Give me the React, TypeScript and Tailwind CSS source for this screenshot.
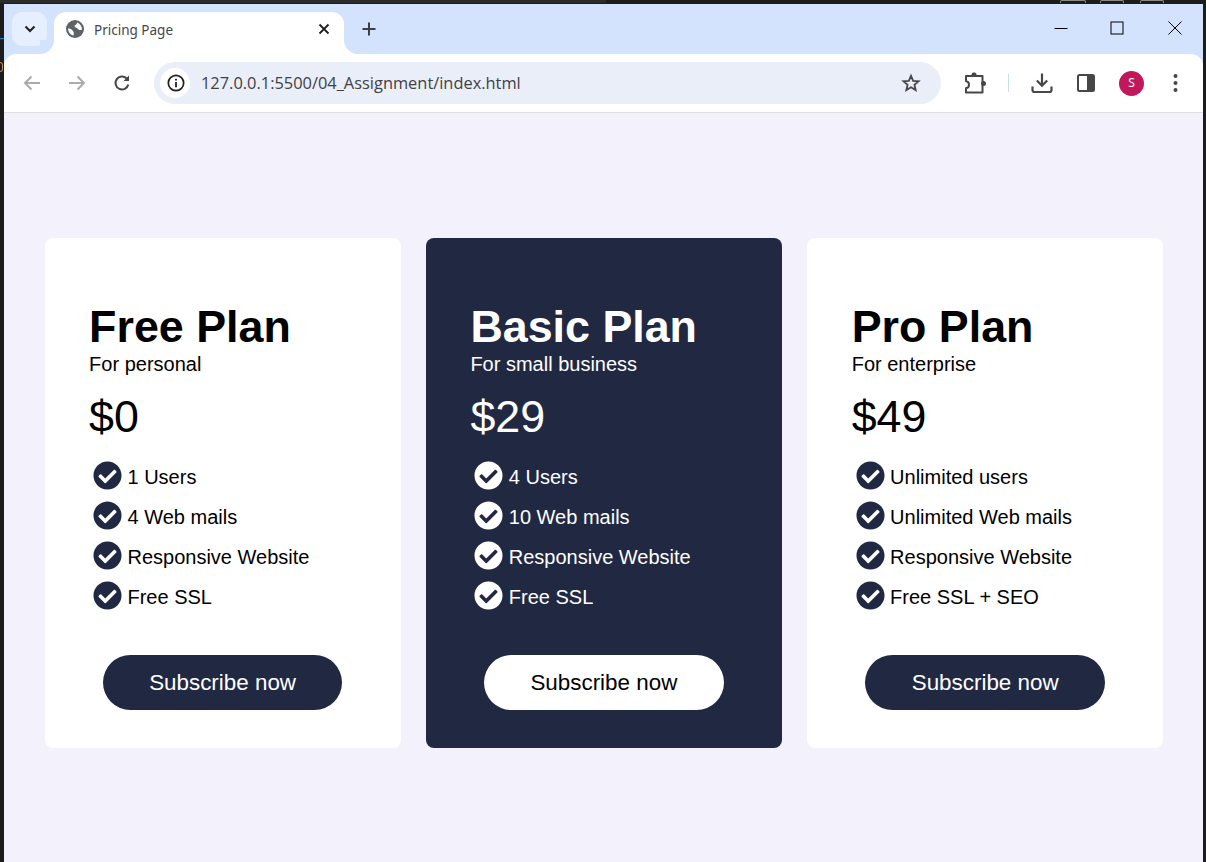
import { FaCheckCircle } from 'react-icons/fa';

const plans = [
  {
    name: 'Free Plan',
    sub: 'For personal',
    price: '$0',
    features: ['1 Users', '4 Web mails', 'Responsive Website', 'Free SSL'],
    dark: false,
  },
  {
    name: 'Basic Plan',
    sub: 'For small business',
    price: '$29',
    features: ['4 Users', '10 Web mails', 'Responsive Website', 'Free SSL'],
    dark: true,
  },
  {
    name: 'Pro Plan',
    sub: 'For enterprise',
    price: '$49',
    features: ['Unlimited users', 'Unlimited Web mails', 'Responsive Website', 'Free SSL + SEO'],
    dark: false,
  },
];

const Globe = () => (
  <svg width="20" height="20" viewBox="0 0 20 20" className="shrink-0">
    <circle cx="10" cy="10" r="9" fill="#5f6368" />
    <path d="M3 9.500C5 9 7 10.500 8 12C9 13 9 15 8.500 16.500C5.500 16 3.200 13 3 9.500Z" fill="#fff" />
    <path d="M12 3.500C15 4.500 17 7.500 17 10.500C15.500 11.500 13.500 11 12.500 9.500C11 8.500 9.500 8 9.500 6.500C11 6 12 5 12 3.500Z" fill="#fff" />
  </svg>
);

const TabStrip = () => (
  <div className="relative flex h-[50px] shrink-0 items-end bg-[#d3e3fd] pl-2">
    <div className="mb-2 mr-[7px] flex h-[34px] w-[35px] items-center justify-center rounded-[10px] bg-[#e6efff]">
      <svg width="12" height="8" viewBox="0 0 12 8" fill="none" stroke="#1f1f1f" strokeWidth="2">
        <path d="M1.500 1.500 6 6l4.500-4.500" />
      </svg>
    </div>
    <div className="relative flex h-[42px] w-[290px] items-center rounded-t-[12px] bg-white pb-[8px] pl-[11px] pr-3">
      <Globe />
      <span className="ml-[9px] mt-[2px] font-['Noto_Sans'] text-[13.500px] text-[#45474a]">Pricing Page</span>
      <svg width="12" height="12" viewBox="0 0 12 12" stroke="#1f1f1f" strokeWidth="1.800" className="ml-auto mr-[2px]">
        <path d="M1.500 1.500 10.500 10.500M10.500 1.500 1.500 10.500" />
      </svg>
      {/* flared tab corners */}
      <div className="absolute bottom-0 left-[-14px] h-[14px] w-[14px] bg-white">
        <div className="h-full w-full rounded-br-[14px] bg-[#d3e3fd]" />
      </div>
      <div className="absolute bottom-0 right-[-14px] h-[14px] w-[14px] bg-white">
        <div className="h-full w-full rounded-bl-[14px] bg-[#d3e3fd]" />
      </div>
    </div>
    <svg width="14" height="14" viewBox="0 0 14 14" stroke="#3c4043" strokeWidth="2" className="mb-[18px] ml-[18px]">
      <path d="M7 .500v13M.500 7h13" />
    </svg>
    <div className="ml-auto mb-[19px] flex items-center">
      <svg width="14" height="14" viewBox="0 0 14 14" stroke="#000" strokeWidth="1" className="mr-[42px]">
        <path d="M0.500 7.500h13" />
      </svg>
      <svg width="14" height="14" viewBox="0 0 14 14" fill="none" stroke="#000" strokeWidth="1" className="mr-[44px]">
        <rect x="1" y="1" width="12" height="12" />
      </svg>
      <svg width="14" height="14" viewBox="0 0 14 14" stroke="#000" strokeWidth="1" className="mr-[21px]">
        <path d="M.500.500l13 13M13.500.500l-13 13" />
      </svg>
    </div>
  </div>
);

const Toolbar = () => (
  <div className="relative flex h-[59px] shrink-0 items-center rounded-t-[12px] border-b border-[#dfdfe3] bg-white">
    <svg width="18" height="16" viewBox="0 0 18 16" fill="none" stroke="#a9abae" strokeWidth="2" className="ml-[19px]">
      <path d="M17 8H2M8.500 1.500 2 8l6.500 6.500" />
    </svg>
    <svg width="18" height="16" viewBox="0 0 18 16" fill="none" stroke="#a9abae" strokeWidth="2" className="ml-[27px]">
      <path d="M1 8h15M9.500 1.500 16 8l-6.500 6.500" />
    </svg>
    <svg width="18" height="18" viewBox="0 0 18 18" fill="none" stroke="#474747" strokeWidth="2" className="ml-[27px]">
      <path d="M15.300 10.500A6.500 6.500 0 1 1 13.500 4.300L15.500 6.300" />
      <path d="M16 1.500v5.500h-5.500" fill="#474747" stroke="none" />
    </svg>
    <div className="ml-[23px] flex h-[42px] w-[787px] items-center rounded-full bg-[#eaeef8] pl-[6px] pr-[20px]">
      <div className="flex h-[30px] w-[30px] items-center justify-center rounded-full bg-white">
        <svg width="18" height="18" viewBox="0 0 18 18" className="ml-[1px]">
          <circle cx="9" cy="9" r="7.700" fill="none" stroke="#1f1f1f" strokeWidth="1.700" />
          <path d="M8.100 8h1.800v5.200H8.100zM8.100 4.800h1.800v1.800H8.100z" fill="#1f1f1f" />
        </svg>
      </div>
      <span className="ml-[11px] mt-[1px] font-['Open_Sans'] text-[16.400px] text-[#3f4145]">
        127.0.0.1:5500/04_Assignment/index.html
      </span>
      <svg width="20" height="20" viewBox="0 0 24 24" fill="none" stroke="#474747" strokeWidth="2.200" strokeLinejoin="miter" className="ml-auto">
        <path d="M12 3.500 14.600 9.500 21 10 16.100 14.200 17.600 20.500 12 17.200 6.400 20.500 7.900 14.200 3 10 9.400 9.500Z" />
      </svg>
    </div>
    <svg width="22" height="22" viewBox="0 0 22 22" fill="#474747" className="ml-[23px]">
      <path d="M2 4h16.500v16.500H2v-4.500c2 0 3-1.500 3-3.500s-1-3-3-3.500z" fill="none" stroke="#474747" strokeWidth="2" strokeLinejoin="round" />
      <rect x="7.500" y="0.500" width="5" height="4" rx="2" />
      <circle cx="19.500" cy="11.500" r="2.500" />
    </svg>
    <div className="ml-[22px] h-[18px] w-px bg-[#c9dcf7]" />
    <svg width="22" height="22" viewBox="0 0 22 22" fill="none" stroke="#474747" strokeWidth="2.200" className="ml-[22px]">
      <path d="M11 1.500V13M5.800 8.500 11 13.700l5.200-5.200M1.500 14.500V18a2 2 0 0 0 2 2h15a2 2 0 0 0 2-2v-3.500" />
    </svg>
    <svg width="18" height="18" viewBox="0 0 18 18" className="ml-[24px]">
      <rect x="1" y="1" width="16" height="16" rx="1.500" fill="#fff" stroke="#474747" strokeWidth="2" />
      <rect x="10" y="1" width="7" height="16" fill="#474747" />
    </svg>
    <div className="ml-[24px] flex h-[25px] w-[25px] items-center justify-center rounded-full bg-[#c2185b] font-['Noto_Sans'] text-[12px] text-white">
      S
    </div>
    <svg width="5" height="20" viewBox="0 0 5 20" fill="#474747" className="ml-[29px]">
      <circle cx="2.500" cy="3" r="2" />
      <circle cx="2.500" cy="10" r="2" />
      <circle cx="2.500" cy="17" r="2" />
    </svg>
  </div>
);

const Card = ({ plan }: { plan: (typeof plans)[number] }) => {
  const dark = plan.dark;
  return (
    <div
      className={`flex h-[510px] w-[356px] flex-col rounded-[8px] px-[44.500px] pt-[63px] ${
        dark ? 'bg-[#212942] text-white' : 'bg-white text-black'
      }`}
    >
      <h2 className="text-[44.800px] font-bold leading-[51px]">{plan.name}</h2>
      <p className="mt-[1px] text-[20px] leading-[23px]">{plan.sub}</p>
      <p className="mt-[15px] text-[44.800px] leading-[51px]">{plan.price}</p>
      <ul className="mt-[19px] flex flex-col gap-[11px]">
        {plan.features.map((f) => (
          <li key={f} className="flex h-[29px] items-center pl-[4px] text-[20px]">
            <FaCheckCircle className={`mr-[5.400px] shrink-0 text-[29px] ${dark ? 'text-white' : 'text-[#212942]'}`} />
            <span className="mt-[3px]">{f}</span>
          </li>
        ))}
      </ul>
      <button
        className={`mx-auto mt-[45px] h-[55px] w-[239.400px] rounded-full text-[22.400px] ${
          dark ? 'bg-white text-black' : 'bg-[#212942] text-white'
        }`}
      >
        Subscribe now
      </button>
    </div>
  );
};

export default function App() {
  return (
    <div className="relative h-[862px] overflow-hidden bg-[#1c1c1c] pl-1 pr-[3px] pt-1 font-['Liberation_Sans',Arial,sans-serif]">
      {/* bits of the desktop showing round the window */}
      <div className="absolute left-0 top-0 h-[3px] w-[606px] bg-[#2b2b2b]" />
      <div className="absolute left-0 top-[38px] h-px w-1 bg-[#0a84d8]" />
      <div className="absolute left-0 top-[62px] h-[10px] w-[3px] rounded-r-full border border-l-0 border-[#c98a4a]" />
      <div className="absolute left-[1060px] top-0 h-[3px] w-[26px] rounded-t-[2px] border border-b-0 border-[#8a8a8a]" />
      <div className="absolute left-[1100px] top-0 h-[3px] w-[24px] rounded-t-[2px] border border-b-0 border-[#8a8a8a]" />
      <div className="absolute left-[1140px] top-0 h-[3px] w-[24px] rounded-t-[2px] border border-b-0 border-[#8a8a8a]" />
      <div className="flex h-full flex-col bg-[#d3e3fd]">
        <TabStrip />
        <Toolbar />
        <main className="flex flex-1 justify-center gap-[25.300px] bg-[#f3f1fc] pl-[0.800px] pt-[125px]">
          {plans.map((p) => (
            <Card key={p.name} plan={p} />
          ))}
        </main>
      </div>
    </div>
  );
}
